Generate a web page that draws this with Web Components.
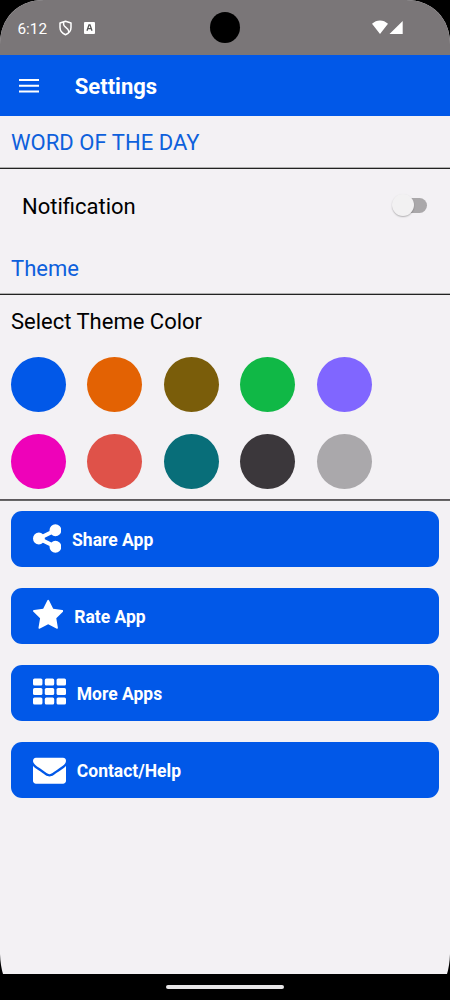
<!DOCTYPE html>
<html lang="en">
<head>
<meta charset="utf-8">
<title>Settings</title>
<style>
html,body{margin:0;background:#000;height:1000px;overflow:hidden}
body{font-family:Roboto,sans-serif}
</style>
</head>
<body>
<settings-screen></settings-screen>
<script>
const define = (name, html, setup) => {
  const t = document.createElement('template');
  t.innerHTML = html;
  customElements.define(name, class extends HTMLElement {
    connectedCallback() {
      if (this.shadowRoot) return;
      this.attachShadow({mode: 'open'}).append(t.content.cloneNode(true));
      if (setup) setup(this, this.shadowRoot);
    }
  });
};

define('status-bar', `
<style>
:host{display:flex;box-sizing:border-box;height:55px;background:#7a7678;color:#fff;position:relative;align-items:flex-start}
.time{font-size:15.300px;line-height:20px;margin:19px 0 0 17.500px;width:41px;white-space:nowrap}
.shield{margin:20px 0 0 .5px}
.a{margin:22px 0 0 12px}
.signal{margin:20px 47px 0 auto}
.camera{position:absolute;left:210px;top:12px;width:30px;height:31px;border-radius:50%;background:#000}
svg{display:block}
</style>
<span class="time">6:12</span>
<svg class="shield" width="13" height="16" viewBox="0 0 13 16" fill="none" stroke="#fff" stroke-width="1.5" stroke-linejoin="round"><path d="M6.500 1.200 12 3v4.600c0 3.300-2.200 5.800-5.500 7.200C3.200 13.400 1 10.900 1 7.600V3ZM4.600 2.200V4.200Q4.700 5.600 6 6.700Q9.500 9.200 9.800 12"/></svg>
<svg class="a" width="11" height="12" viewBox="0 0 11 12"><rect width="11" height="12" rx="1" fill="#fff"/><path d="m3 8.800 2-6h1l2 6M3.700 6.700h3.600" fill="none" stroke="#555" stroke-width="1.300"/></svg>
<svg class="signal" width="31" height="15" viewBox="0 0 31 15" fill="#fff"><path d="M0 3.800C4.500-.7 11.500-.7 16 3.800L8 14ZM30.700 1v13H17.500Z"/></svg>
<span class="camera"></span>`);

define('app-bar', `
<style>
:host{display:flex;height:61px;background:#0158e8;color:#fff;align-items:center}
svg{display:block;margin-left:18.500px}
h1{font-size:22px;line-height:28px;margin:3px 0 0 36.300px;font-weight:700}
</style>
<svg width="20" height="14" viewBox="0 0 20 14" fill="#fff"><path d="M0 0h20v2H0zM0 5.700h20v2H0zM0 11.400h20v2H0z"/></svg>
<h1><slot></slot></h1>`);

define('section-title', `
<style>
:host{display:block;box-sizing:border-box;border-bottom:1px solid #222;box-shadow:inset 0 -1px #b0b0b0;color:#0d60dc;font-size:22px;letter-spacing:.04px;line-height:28px;padding:13px 11px 11px}
</style><slot></slot>`);

define('toggle-row', `
<style>
:host{display:flex;box-sizing:border-box;height:73px;padding:1px 23px 0 22px;align-items:center;justify-content:space-between;font-size:22px;color:#000}
.track{width:28px;height:15px;border-radius:8px;background:#aaa8aa;position:relative;margin-top:-2px}
.knob{position:absolute;left:-7px;top:-4px;width:22px;height:22px;border-radius:50%;background:#f2f1f2;box-shadow:0 1px 1.500px #0004}
</style><slot></slot><span class="track"><span class="knob"></span></span>`);

define('color-swatch', `
<style>:host{display:block;width:55px;height:55px;border-radius:50%}</style>`,
el => { el.style.background = el.getAttribute('color'); });

define('color-picker', `
<style>
:host{display:block;box-sizing:border-box;height:206px;padding:13px 11px 0;border-bottom:1px solid #666;box-shadow:inset 0 -1px #5c585c}
.label{font-size:22px;line-height:28px;color:#000}
.grid{display:grid;grid-template-columns:repeat(5,55px);column-gap:21.480px;row-gap:22px;margin-top:20.700px}
</style>
<div class="label">Select Theme Color</div>
<div class="grid"><slot></slot></div>`);

const icons = {
  share: ['128 0 1536 1792', 28.3, '<path d="M1344 1024q133 0 226.500 93.500t93.500 226.500-93.500 226.500-226.500 93.500-226.500-93.500-93.500-226.500q0-12 2-34l-360-180q-92 86-218 86-133 0-226.500-93.500t-93.500-226.500 93.500-226.500 226.500-93.500q126 0 218 86l360-180q-2-22-2-34 0-133 93.500-226.500t226.500-93.500 226.500 93.500 93.500 226.500-93.500 226.500-226.500 93.500q-126 0-218-86l-360 180q2 22 2 34t-2 34l360 180q92-86 218-86z"/>'],
  star: ['64 0 1664 1792', 30.4, '<path d="M1728 647q0 22-26 48l-363 354 86 500q1 7 1 20 0 21-10.500 35.500t-30.500 14.500q-19 0-40-12l-449-236-449 236q-22 12-40 12-21 0-31.500-14.500t-10.500-35.500q0-6 2-20l86-500-364-354q-25-27-25-48 0-37 56-46l502-73 225-455q19-41 49-41t49 41l225 455 502 73q56 9 56 46z"/>'],
  grid: ['0 0 1792 1792', 33, [128, 640, 1152].map(y => [0, 640, 1280].map(x => `<rect x="${x}" y="${y + 10}" width="512" height="384" rx="84"/>`).join('')).join('')],
  mail: ['0 0 1792 1792', 33, '<path d="M1792 710v794q0 66-47 113t-113 47h-1472q-66 0-113-47t-47-113v-794q44 49 101 87 362 246 497 345 57 42 92.500 65.500t94.500 48 110 24.500h2q51 0 110-24.500t94.500-48 92.500-65.500q170-123 498-345 57-39 100-87zm0-294q0 79-49 151t-122 123q-376 261-468 325-10 7-42.500 31t-54 38.500-52 32.500-57.500 27-50 9h-2q-23 0-50-9t-57.500-27-52-32.500-54-38.500-42.500-31q-91-64-262-182.500t-205-142.500q-62-42-117-115.500t-55-136.500q0-78 41.500-130t118.500-52h1472q65 0 112.500 47t47.500 113z"/>']
};

define('action-button', `
<style>
:host{display:flex;box-sizing:border-box;height:55.300px;border-radius:11px;background:#0158e8;color:#fff;padding-left:22px;gap:10.800px;font-weight:700;font-size:17.500px;line-height:24px}
.icon{margin-top:10.500px;height:33px}
svg{display:block}
.text{margin-top:16.600px}
</style><span class="icon"></span><span class="text"><slot></slot></span>`,
(el, root) => {
  const [box, w, art] = icons[el.getAttribute('icon')];
  root.querySelector('.icon').innerHTML = `<svg width="${w}" height="33" viewBox="${box}" fill="#fff">${art}</svg>`;
});

define('nav-bar', `
<style>
:host{display:flex;height:26px;background:#000;justify-content:center;align-items:center}
span{width:118px;height:4px;border-radius:2px;background:#e8e6e8}
</style><span></span>`);

define('settings-screen', `
<style>
:host{display:block;width:450px;height:1000px;background:#000}
.clip{height:974px;background:#f3f1f4;clip-path:path("M0 44C0 18 18 0 44 0H406C432 0 450 18 450 44V954Q449.500 966 447 974H3Q.5 966 0 954Z")}
.actions{display:grid;gap:21.700px;padding:10.400px 11px 0}
</style>
<div class="clip">
  <status-bar></status-bar>
  <app-bar>Settings</app-bar>
  <section-title>WORD OF THE DAY</section-title>
  <toggle-row>Notification</toggle-row>
  <section-title>Theme</section-title>
  <color-picker>
    <color-swatch color="#0158e8"></color-swatch>
    <color-swatch color="#e36203"></color-swatch>
    <color-swatch color="#7a5d0a"></color-swatch>
    <color-swatch color="#10b846"></color-swatch>
    <color-swatch color="#8066ff"></color-swatch>
    <color-swatch color="#ee02b9"></color-swatch>
    <color-swatch color="#df5249"></color-swatch>
    <color-swatch color="#086e79"></color-swatch>
    <color-swatch color="#3b373b"></color-swatch>
    <color-swatch color="#aaa8ab"></color-swatch>
  </color-picker>
  <div class="actions">
    <action-button icon="share">Share App</action-button>
    <action-button icon="star">Rate App</action-button>
    <action-button icon="grid">More Apps</action-button>
    <action-button icon="mail">Contact/Help</action-button>
  </div>
</div>
<nav-bar></nav-bar>`);
</script>
</body>
</html>
